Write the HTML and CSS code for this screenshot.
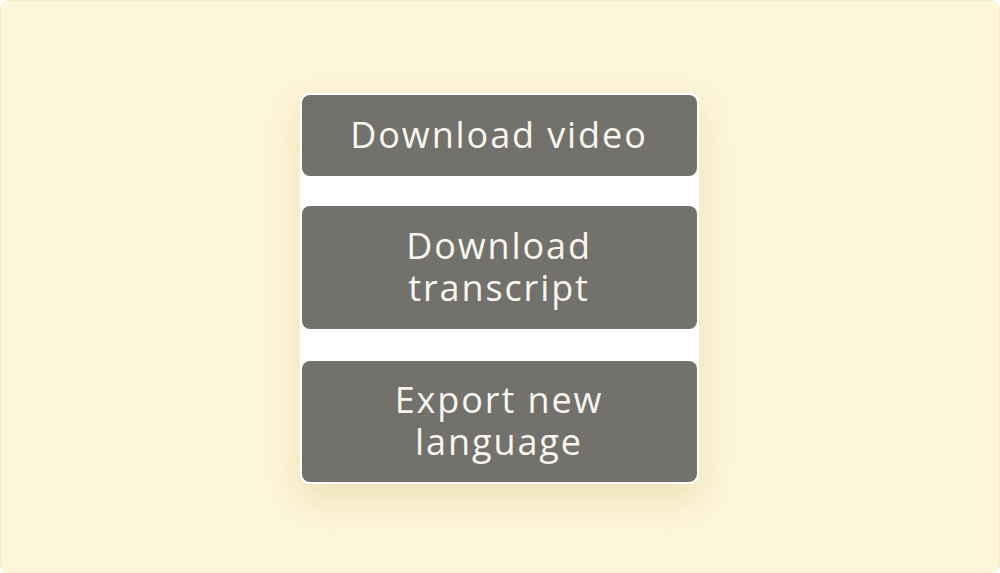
FILE: index.html
```html
<!DOCTYPE html>
<html>
<head>
<meta charset="utf-8">
<link rel="stylesheet" href="styles.css">
</head>
<body>
<div class="frame">
  <div class="menu">
    <button class="item">Download video</button>
    <button class="item">Download<br>transcript</button>
    <button class="item">Export new<br>language</button>
  </div>
</div>
</body>
</html>
```
FILE: styles.css
```css
html, body {
  margin: 0;
  padding: 0;
  background: #ffffff;
}
.frame {
  box-sizing: border-box;
  width: 1000px;
  height: 573px;
  background: #fef6da;
  border: 1px solid #f5ebc4;
  border-radius: 10px;
  display: flex;
  justify-content: center;
  align-items: flex-start;
  padding-top: 92px;
}
.menu {
  width: 395px;
  margin-left: -2px;
  background: #ffffff;
  border-radius: 9px;
  padding: 2px;
  display: flex;
  flex-direction: column;
  gap: 30px;
  box-shadow: 0 14px 36px rgba(200, 180, 110, 0.35);
}
.item {
  border: none;
  background: #72716c;
  color: #f8f6ee;
  border-radius: 8px;
  font-family: "Open Sans", "Lato", sans-serif;
  font-weight: 400;
  font-size: 36px;
  letter-spacing: 1.9px;
  line-height: 42px;
  padding: 19px 10px 20px;
  text-align: center;
}
.item:last-child {
  margin-top: 2px;
  padding: 18px 10px 19px;
}
```
